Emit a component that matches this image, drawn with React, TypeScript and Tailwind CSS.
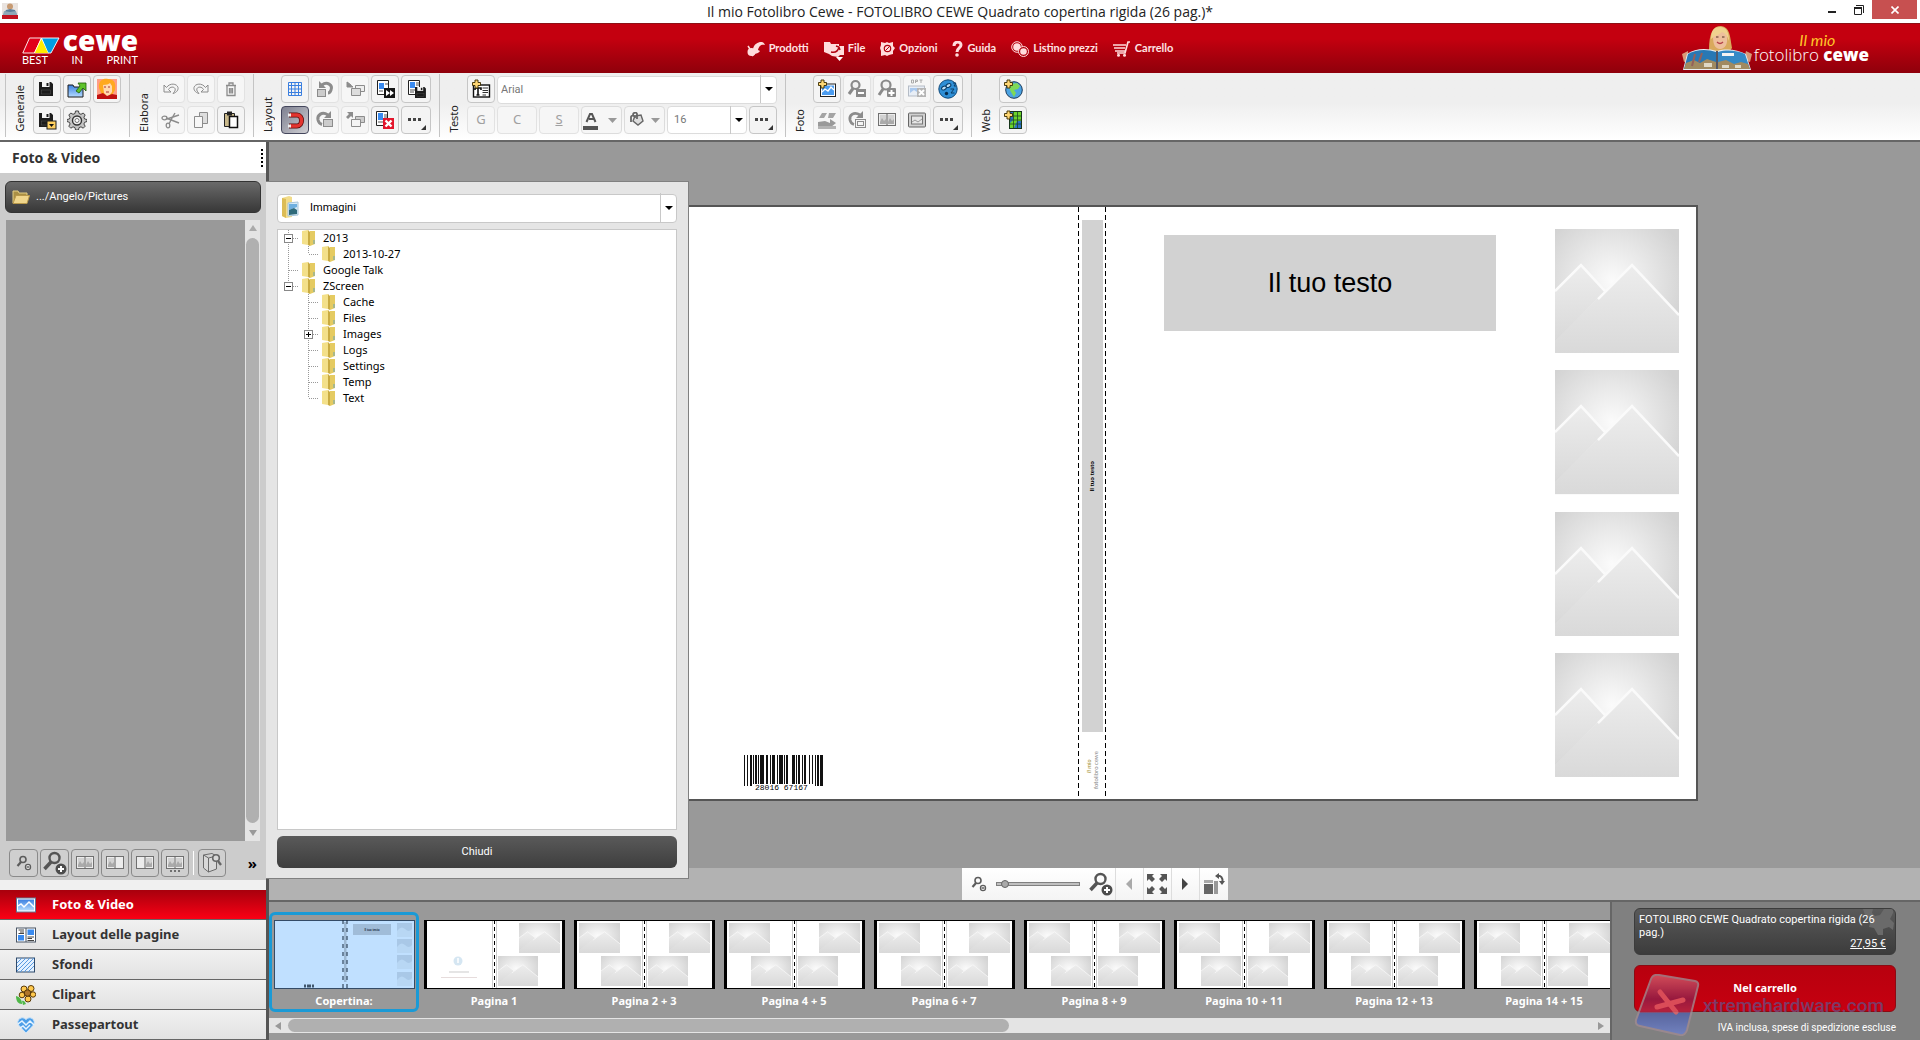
import React, { useState } from "react";

const UI_FONT = "font-['Noto_Sans','Open_Sans',sans-serif]";

interface IconProps {
  size?: string;
  box?: string;
  children: React.ReactNode;
}

const Icon: React.FC<IconProps> = ({ size = "h-5 w-5", box = "0 0 20 20", children }) => (
  <svg viewBox={box} className={`${size} shrink-0`} fill="none" aria-hidden="true">
    {children}
  </svg>
);

/* ---------- shared drawings ---------- */

const SharedDefs: React.FC = () => (
  <svg className="absolute h-0 w-0" aria-hidden="true">
    <defs>
      <radialGradient id="glow" cx="0.46" cy="0.42" r="0.62">
        <stop offset="0" stopColor="#fbfbfb" />
        <stop offset="0.45" stopColor="#e9e9e9" />
        <stop offset="1" stopColor="#d2d2d2" />
      </radialGradient>
      <linearGradient id="slope" x1="0" y1="0" x2="0" y2="1">
        <stop offset="0" stopColor="#ededed" />
        <stop offset="1" stopColor="#d9d9d9" />
      </linearGradient>
      <linearGradient id="sky" x1="0" y1="0" x2="0" y2="1">
        <stop offset="0" stopColor="#3a7fe0" />
        <stop offset="1" stopColor="#b5dcff" />
      </linearGradient>
      <linearGradient id="badge" x1="0" y1="0" x2="0" y2="1">
        <stop offset="0" stopColor="#d8606c" />
        <stop offset="0.4" stopColor="#8e1f4a" />
        <stop offset="0.62" stopColor="#b52a48" />
        <stop offset="0.63" stopColor="#4f5fa6" />
        <stop offset="1" stopColor="#6f83cf" />
      </linearGradient>
      <symbol id="photo" viewBox="0 0 124 124" preserveAspectRatio="none">
        <rect width="124" height="124" fill="url(#glow)" />
        <path d="M0 62L26 36L50 62L0 111Z" fill="url(#slope)" />
        <path d="M0 111L77 36L124 86V124H0Z" fill="url(#slope)" />
        <path d="M0 62L26 36L50 62M43 70L77 36L124 86" stroke="#fafafa" strokeWidth="2.5" fill="none" />
      </symbol>
    </defs>
  </svg>
);

const Plus = () => (
  <path
    d="M4 1h3v2.500h2.500v3H7V9H4V6.500H1.500v-3H4z"
    fill="#ffd774"
    stroke="#3a2c00"
    strokeWidth="0.900"
  />
);

const Disk = ({ x = 3, y = 3, s = 1 }) => (
  <g transform={`translate(${x} ${y}) scale(${s})`}>
    <path d="M0 0h12l2 2v12H0z" fill="#1c1c1c" />
    <rect x="3" width="7.500" height="5" fill="#f5f5f5" />
    <rect x="7.500" y="1" width="2" height="3" fill="#1c1c1c" />
    <rect x="2.500" y="8" width="9" height="4" fill="#1c1c1c" stroke="#555" strokeWidth="0.500" />
  </g>
);

const LensMinus = ({ color = "#8a8a8a" }) => (
  <Icon>
    <circle cx="8.500" cy="6" r="4" stroke={color} strokeWidth="2.200" fill="#f2f2f2" />
    <path d="M6 9.500L2 15" stroke={color} strokeWidth="3" />
    <rect x="9" y="10" width="10" height="8" fill={color} />
    <path d="M11 14h6" stroke="#fff" strokeWidth="2" />
  </Icon>
);

const LensPlus = ({ color = "#8a8a8a" }) => (
  <Icon>
    <circle cx="9" cy="6" r="4.500" stroke={color} strokeWidth="2.200" fill="#f2f2f2" />
    <path d="M6 10L2 16" stroke={color} strokeWidth="3" />
    <rect x="10" y="9" width="9" height="9" rx="1" fill={color} />
    <path d="M14.500 11v6M11.500 14h6" stroke="#fff" strokeWidth="2" />
  </Icon>
);

const Dots = () => (
  <Icon size="h-6 w-6" box="0 0 24 24">
    <path d="M4 10h3v3H4zM9 10h3v3H9zM14 10h3v3h-3z" fill="#444" />
    <path d="M22 17v5h-5z" fill="#333" />
  </Icon>
);

const Spread = ({ left = true, right = true, dots = false }) => (
  <Icon size="h-5 w-5">
    <rect x="1.500" y="3.500" width="17" height="12" fill="#ececec" stroke="#707070" />
    {left && <path d="M3 5h6v9H3z" fill="#d2d2d2" />}
    {left && <path d="M3 12l2-4 2 3 2-2v5H3z" fill="#aaa" />}
    {right && <path d="M11 5h6v9h-6z" fill="#d2d2d2" />}
    {right && <path d="M11 12l2-4 2 3 2-2v5h-6z" fill="#aaa" />}
    <path d="M10 3.500v12" stroke="#606060" />
    {dots && <path d="M5 17h2v2H5zM9 17h2v2H9zM13 17h2v2h-2z" fill="#707070" />}
  </Icon>
);

const Magnifier = ({ plus = false, small = false }) => (
  <Icon size={small ? "h-4 w-4" : "h-6 w-6"} box={small ? "0 0 16 16" : "0 0 24 24"}>
    {small ? (
      <>
        <circle cx="7" cy="4.500" r="3" stroke="#5c5c5c" strokeWidth="1.600" />
        <path d="M5 7L1.500 11" stroke="#5c5c5c" strokeWidth="2.200" />
        <circle cx="12" cy="12" r="2.600" stroke="#5c5c5c" strokeWidth="1.200" fill="#f0f0f0" />
        <path d="M10.500 12h3" stroke="#5c5c5c" strokeWidth="1.400" />
      </>
    ) : (
      <>
        <circle cx="11.500" cy="7" r="5" stroke="#555" strokeWidth="2.400" />
        <path d="M8 11L1.500 18" stroke="#555" strokeWidth="3.500" />
        {plus && <circle cx="18" cy="18" r="5.500" fill="#4c4c4c" />}
        {plus && <path d="M18 15v6M15 18h6" stroke="#fff" strokeWidth="2" />}
      </>
    )}
  </Icon>
);

const Picture = () => (
  <Icon>
    <rect x="0.500" y="3" width="19" height="14" fill="#fff" stroke="#5d7694" />
    <rect x="2" y="4.500" width="16" height="11" fill="url(#sky)" />
    <path d="M2 11l3-2 3 3 5-5 5 5" stroke="#fff" strokeWidth="1.500" />
  </Icon>
);

/* ---------- toolbar ---------- */

interface Tool {
  name: string;
  icon: React.ReactNode;
  off?: boolean;
  active?: boolean;
  wide?: boolean;
}

const ToolButton: React.FC<{ tool: Tool }> = ({ tool }) => (
  <button
    aria-label={tool.name}
    className={`flex h-7 items-center justify-center rounded-sm border ${
      tool.wide ? "w-[30px]" : "w-7"
    } ${
      tool.active
        ? "border-[#44465c] bg-linear-to-br from-[#7e8090] to-[#d0d0d4]"
        : tool.off
          ? "border-[#e2e2e2] bg-[#f6f6f6]"
          : "border-[#c6c6c6] bg-[#f4f4f4]"
    }`}
  >
    {tool.icon}
  </button>
);

const ToolGroup: React.FC<{ label: string; children: React.ReactNode }> = ({ label, children }) => (
  <div className="flex border-l border-[#c4c4c4] pr-2">
    <div className="flex w-[27px] items-end justify-center pb-[5px]">
      <span className="rotate-180 text-[11px] leading-4 text-[#222] [writing-mode:vertical-rl]">{label}</span>
    </div>
    <div className="flex flex-col gap-[3px] pt-px pb-[3px]">{children}</div>
  </div>
);

const ToolRow: React.FC<{ tools: Tool[] }> = ({ tools }) => (
  <div className="flex gap-[2px]">
    {tools.map((tool) => (
      <ToolButton key={tool.name} tool={tool} />
    ))}
  </div>
);

const grey = "#8c8c8c";

const generalTop: Tool[] = [
  { name: "Salva", icon: <Icon><Disk x={2} /></Icon> },
  {
    name: "Apri",
    icon: (
      <Icon>
        <path d="M1 6h5l1 2h9v10H1z" fill="url(#sky)" stroke="#1d1d1d" />
        <path d="M9 12l4-5-2-3h8v8l-3-3-4 5z" fill="#5fc32a" stroke="#1f5b08" strokeWidth="0.800" />
      </Icon>
    ),
  },
  {
    name: "Assistente",
    icon: (
      <Icon size="h-6 w-6" box="0 0 24 24">
        <rect x="2" y="2" width="20" height="20" fill="#ff9d86" />
        <path d="M4 11C3 3 9 1 13 2c7 0 8 5 7 11l-3 5H7z" fill="#ffa91f" />
        <path d="M8 8c3 0 6-1 7-2l2 3v6l-4 5-4-4z" fill="#ffd9b0" />
        <path d="M2 22v-4l6-2 4 3 5-2 5 1v4z" fill="#c01010" />
        <path d="M9 10h2M13 10h2M11 15h3" stroke="#a33" />
      </Icon>
    ),
  },
];

const generalBottom: Tool[] = [
  {
    name: "Salva con nome",
    icon: (
      <Icon>
        <Disk x={2} y={3} />
        <rect x="10" y="11" width="9" height="8" fill="#ffd060" stroke="#1d1d1d" />
        <path d="M12 14h5l-2.500 3z" fill="#111" />
      </Icon>
    ),
  },
  {
    name: "Impostazioni",
    icon: (
      <Icon>
        <path
          d="M8.500 1h3l.5 2.500 2 .8L16.200 3l2 2-1.300 2.200.7 1.800 2.400.5v2l-2.400.8-.7 1.700 1.300 2.200-2 2-2.200-1.400-2 .8-.5 2.400h-3L8 17.600l-2-.8-2.200 1.400-2-2L3.100 14l-.7-1.700L0 11.500v-2L2.400 9l.7-1.800L1.800 5l2-2L6 4.300l2-.8z"
          fill="#c4c4c4"
          stroke="#444"
        />
        <circle cx="10" cy="10.500" r="4.500" fill="#eee" stroke="#333" strokeWidth="1.400" />
        <circle cx="10" cy="10.500" r="2" fill="#fff" stroke="#777" />
      </Icon>
    ),
  },
];

const editTop: Tool[] = [
  {
    name: "Annulla",
    off: true,
    icon: (
      <Icon size="h-4 w-4" box="0 0 16 16">
        <path d="M1 4v7h7L5.500 8.500C7 5.500 11 5.500 12 7.500c1 2-1 3.500-2 5 4-1 5.500-4 5-6C14 2.500 7 1.500 3.500 6.500z" fill="#f4f4f4" stroke={grey} />
      </Icon>
    ),
  },
  {
    name: "Ripeti",
    off: true,
    icon: (
      <Icon size="h-4 w-4" box="0 0 16 16">
        <path d="M15 4v7H8l2.500-2.500C9 5.500 5 5.500 4 7.500c-1 2 1 3.500 2 5-4-1-5.500-4-5-6C2 2.500 9 1.500 12.500 6.500z" fill="#f4f4f4" stroke={grey} />
      </Icon>
    ),
  },
  {
    name: "Elimina",
    off: true,
    icon: (
      <Icon size="h-4 w-4" box="0 0 16 16">
        <path d="M3 4.500h10M6 4V2h4v2M4 5v9.500h8V5M6.500 7v5.500M9.500 7v5.500M8 7v5.500" stroke={grey} strokeWidth="1.300" />
      </Icon>
    ),
  },
];

const editBottom: Tool[] = [
  {
    name: "Taglia",
    off: true,
    icon: (
      <Icon>
        <path d="M5 8l13 5M8 14l3-6 3-5M6 9l12-4" stroke={grey} strokeWidth="1.400" />
        <ellipse cx="3.500" cy="8" rx="2.500" ry="1.800" stroke={grey} strokeWidth="1.300" />
        <ellipse cx="7" cy="15.500" rx="1.800" ry="2.300" stroke={grey} strokeWidth="1.300" />
      </Icon>
    ),
  },
  {
    name: "Copia",
    off: true,
    icon: (
      <Icon>
        <path d="M8.500 2.500h8v11h-8z" fill="#ddd" stroke={grey} />
        <path d="M3.500 6.500h8v11h-8z" fill="#f7f7f7" stroke={grey} />
      </Icon>
    ),
  },
  {
    name: "Incolla",
    icon: (
      <Icon>
        <path d="M3.500 3.500h10v13h-10z" fill="#c9b98b" stroke="#222" />
        <path d="M6 1.500h5v4H6z" fill="#222" />
        <path d="M8.500 6.500h8v11h-8z" fill="#fff" stroke="#111" strokeWidth="1.500" />
      </Icon>
    ),
  },
];

const layoutTop: Tool[] = [
  {
    name: "Griglia",
    icon: (
      <Icon>
        <path d="M3.500 3.500h13v13h-13zM6.500 3v14M10 3v14M13.500 3v14M3 6.500h14M3 10h14M3 13.500h14" stroke="#3a7fe0" />
      </Icon>
    ),
  },
  {
    name: "Ruota a sinistra",
    off: true,
    icon: (
      <Icon>
        <path d="M7 6c5-4 11 0 9 5-.5 1.500-2 3-3 3" stroke={grey} strokeWidth="3" />
        <path d="M4 2v7h7z" fill={grey} />
        <rect x="2.500" y="10.500" width="8" height="7" fill="#ccc" stroke={grey} />
      </Icon>
    ),
  },
  {
    name: "In secondo piano",
    off: true,
    icon: (
      <Icon>
        <path d="M10.500 6.500h9v6h-9z" fill="#eee" stroke={grey} />
        <path d="M6.500 9.500h9v7h-9z" fill="#ddd" stroke={grey} />
        <path d="M2 3l4 3M2 3v5h6z" stroke={grey} fill={grey} />
      </Icon>
    ),
  },
  {
    name: "Applica layout",
    icon: (
      <Icon>
        <path d="M2.500 1.500h11v14h-11z" fill="#fff" stroke="#222" />
        <path d="M4 4h5v6H4z" fill="#3a8bf0" />
        <path d="M10 5h3M4 12h4" stroke="#555" />
        <rect x="9" y="9" width="11" height="10" fill="#151515" />
        <path d="M11 11l4 3-4 3zM15 11l4 3-4 3z" fill="#fff" />
      </Icon>
    ),
  },
  {
    name: "Salva layout",
    icon: (
      <Icon>
        <path d="M2.500 1.500h11v14h-11z" fill="#fff" stroke="#222" />
        <path d="M4 3h5v6H4z" fill="#3a8bf0" />
        <path d="M10 4h3M10 6h3M4 11h5M4 13h4" stroke="#555" />
        <Disk x={9} y={8} s={0.78} />
      </Icon>
    ),
    wide: true,
  },
];

const layoutBottom: Tool[] = [
  {
    name: "Magnete",
    active: true,
    icon: (
      <Icon>
        <path d="M4 5h8c6 0 6 11 0 11H4" stroke="#5a0d0d" strokeWidth="5" />
        <path d="M5 5h7c6 0 6 11 0 11H5" stroke="#e3342f" strokeWidth="3.500" />
        <path d="M3 3.500h3v3H3zM3 14.500h3v3H3z" fill="#eee" />
      </Icon>
    ),
  },
  {
    name: "Ruota a destra",
    off: true,
    icon: (
      <Icon>
        <path d="M13 5C7 1 2 5 3 10c.5 2 2 4 4 4.500" stroke={grey} strokeWidth="3" />
        <path d="M16 1v7H9z" fill={grey} />
        <rect x="8.500" y="9.500" width="9" height="7" fill="#ccc" stroke={grey} />
      </Icon>
    ),
  },
  {
    name: "In primo piano",
    off: true,
    icon: (
      <Icon>
        <path d="M10.500 6.500h9v6h-9z" fill="#ccc" stroke={grey} />
        <path d="M6.500 9.500h9v7h-9z" fill="#f4f4f4" stroke={grey} />
        <path d="M2 2h6v6L6 6 3 9 1 7l3-3z" fill={grey} />
      </Icon>
    ),
  },
  {
    name: "Elimina layout",
    icon: (
      <Icon>
        <path d="M1.500 1.500h11v14h-11z" fill="#fff" stroke="#222" />
        <path d="M3 3h5v7H3z" fill="#3a8bf0" />
        <path d="M9 5h3M9 7h3M3 12h5" stroke="#555" />
        <rect x="8" y="8" width="11" height="11" fill="#e3152b" />
        <path d="M10.500 10.500l6 6M16.500 10.500l-6 6" stroke="#fff" strokeWidth="2.400" />
      </Icon>
    ),
  },
  { name: "Altre opzioni layout", icon: <Dots />, wide: true },
];

const photoTop: Tool[] = [
  {
    name: "Aggiungi foto",
    icon: (
      <Icon>
        <rect x="3.500" y="5" width="15" height="12.500" fill="#fff" stroke="#222" />
        <rect x="5" y="6.500" width="12" height="9.500" fill="#4b9cf0" />
        <path d="M5 13l3-3 3 2 3-4 3 3" stroke="#fff" strokeWidth="1.300" />
        <Plus />
      </Icon>
    ),
  },
  { name: "Riduci foto", off: true, icon: <LensMinus /> },
  { name: "Ingrandisci foto", off: true, icon: <LensPlus /> },
  {
    name: "Ottimizzazione",
    off: true,
    icon: (
      <Icon>
        <path d="M4.500 1h2v3h-2zM8.500 4V1h2v1.500h-2M12.500 1h3M14 1v3" stroke="#aaa" />
        <rect x="1.500" y="7" width="16" height="10" fill="#e8eef6" stroke="#b5bcc6" />
        <path d="M3 14l4-3 3 2V9H3z" fill="#a9c8ee" />
        <rect x="10" y="9" width="9" height="9" fill="#b5b5b5" />
        <path d="M12 11l5 5M17 11l-5 5" stroke="#fff" strokeWidth="2" />
      </Icon>
    ),
  },
  {
    name: "Effetti",
    icon: (
      <Icon>
        <circle cx="10" cy="10" r="9.200" fill="#2f8fd6" stroke="#114a7a" />
        <ellipse cx="6" cy="9" rx="2.600" ry="1.700" fill="#bfe0f7" stroke="#0a3c66" transform="rotate(-30 6 9)" />
        <ellipse cx="10.500" cy="6.500" rx="2.600" ry="1.700" fill="#bfe0f7" stroke="#0a3c66" transform="rotate(-30 10.500 6.500)" />
        <circle cx="8.500" cy="14.500" r="1.700" fill="#062a4a" />
        <path d="M12.500 10h3.500l-3 4h3.500M15 4h3l-2 3h2" stroke="#0a3c66" />
      </Icon>
    ),
    wide: true,
  },
];

const photoBottom: Tool[] = [
  {
    name: "Sostituisci foto",
    off: true,
    icon: (
      <Icon>
        <path d="M5 3h5l-3 5H2zM12 3h7l-3 5h-5z" fill="#a4a4a4" />
        <path d="M1 12l7-1 5 2V9l6 4-5 4H1z" fill="#9a9a9a" />
        <path d="M1 16h18v3H1z" fill="#b4b4b4" />
      </Icon>
    ),
  },
  {
    name: "Ruota foto",
    off: true,
    icon: (
      <Icon>
        <path d="M13 5C7 1 2 5 3 10c.5 2 2 4 4 4.500" stroke={grey} strokeWidth="2.800" />
        <path d="M16 1v7H9z" fill={grey} />
        <rect x="8.500" y="9.500" width="10" height="8" fill="#f4f4f4" stroke={grey} />
        <rect x="10.500" y="11.500" width="6" height="4" stroke={grey} />
      </Icon>
    ),
  },
  { name: "Foto su due pagine", off: true, icon: <Spread /> },
  {
    name: "Cornice",
    off: true,
    icon: (
      <Icon>
        <rect x="1.500" y="3" width="17" height="14" rx="1" fill="#d0d0d0" stroke="#666" />
        <rect x="4.500" y="6" width="11" height="8" fill="#e6e6e6" stroke="#777" />
        <path d="M5 12l3-2 3 2 4-3" stroke="#999" />
      </Icon>
    ),
  },
  { name: "Altre opzioni foto", icon: <Dots />, wide: true },
];

const Globe = () => (
  <Icon>
    <circle cx="11" cy="11" r="8.300" fill="#4ba3e3" stroke="#1a3a5a" />
    <path d="M9 5l5-1 3 3-2 3-4 1 2 3-2 4-3-5-2-4z" fill="#7ed957" />
    <Plus />
  </Icon>
);

const WebMap = () => (
  <Icon>
    <rect x="6.500" y="1.500" width="12" height="17" fill="#2d6fc4" stroke="#17351a" />
    <path d="M10 2h8v9h-4l-3 7H7v-5l3-3z" fill="#6cd52b" />
    <path d="M10.500 2v16M14.500 2v16M7 6h11M7 10h11M7 14h11" stroke="#1d4a24" strokeWidth="0.800" />
    <Plus />
  </Icon>
);

const DropArrow: React.FC<{ width: string }> = ({ width }) => (
  <span
    className={`pointer-events-none absolute inset-y-0 right-0 flex ${width} items-center justify-center border-l border-[#c8c8c8]`}
  >
    <svg viewBox="0 0 8 4" className="h-1 w-2" aria-hidden="true">
      <path d="M0 0h8L4 4z" fill="#000" />
    </svg>
  </span>
);

const TextTools: React.FC = () => (
  <>
    <div className="flex gap-[2px]">
      <ToolButton
        tool={{
          name: "Aggiungi testo",
          icon: (
            <Icon>
              <rect x="2.500" y="6" width="16" height="12" fill="#fff" stroke="#111" strokeWidth="1.400" />
              <path d="M4 9h6v2M4 11V9M7 9v7M5.500 16h3" stroke="#111" strokeWidth="1.600" />
              <path d="M11.500 9H17M11.500 11.500H17M11.500 13.500H17M11.500 16H15" stroke="#333" />
              <Plus />
            </Icon>
          ),
        }}
      />
      <div className="relative h-7 flex-1">
        <select
          aria-label="Carattere"
          className="h-full w-full appearance-none rounded-sm border border-[#dcdcdc] bg-white pl-[3px] font-['Roboto',sans-serif] text-[11px] text-[#777]"
        >
          <option>Arial</option>
        </select>
        <DropArrow width="w-[17px]" />
      </div>
    </div>
    <div className="flex gap-[2px] text-[13px] text-[#a0a0a0]">
      <button aria-label="Grassetto" className="h-7 w-7 rounded-sm border border-[#e2e2e2] bg-[#f6f6f6]">
        G
      </button>
      <button aria-label="Corsivo" className="h-7 w-10 rounded-sm border border-[#e2e2e2] bg-[#f6f6f6]">
        C
      </button>
      <button aria-label="Sottolineato" className="h-7 w-10 rounded-sm border border-[#e2e2e2] bg-[#f6f6f6] underline">
        S
      </button>
      <button
        aria-label="Colore testo"
        className="flex h-7 w-[41px] items-center justify-between rounded-sm border border-[#dcdcdc] bg-[#f6f6f6] pr-1"
      >
        <Icon>
          <path d="M4.500 12L8 4h2l3.500 8M7 9h5" stroke="#555" strokeWidth="2" />
          <path d="M1 16h15v4H1z" fill="#555" />
        </Icon>
        <Icon size="h-[5px] w-[9px]" box="0 0 9 5">
          <path d="M0 0h9L4.500 5z" fill="#999" />
        </Icon>
      </button>
      <button
        aria-label="Colore sfondo"
        className="flex h-7 w-[41px] items-center justify-between rounded-sm border border-[#dcdcdc] bg-[#f6f6f6] px-1"
      >
        <Icon size="h-4 w-4" box="0 0 16 16">
          <path d="M6 4l6-1 2 6-5 4-5-4z" fill="#ddd" stroke="#666" strokeWidth="1.400" />
          <path d="M8 7V2C8 0 4 0 4 3M2 10V5c0-2 4-2 4 1" stroke="#666" strokeWidth="1.800" />
        </Icon>
        <Icon size="h-[5px] w-[9px]" box="0 0 9 5">
          <path d="M0 0h9L4.500 5z" fill="#999" />
        </Icon>
      </button>
      <div className="relative h-7 w-20">
        <select
          aria-label="Dimensione"
          className="h-full w-full appearance-none rounded-sm border border-[#dcdcdc] bg-white pl-[6px] font-['Roboto',sans-serif] text-[11px] text-[#777]"
        >
          <option>16</option>
        </select>
        <DropArrow width="w-[17px]" />
      </div>
      <ToolButton tool={{ name: "Altre opzioni testo", icon: <Dots /> }} />
    </div>
  </>
);

const Toolbar: React.FC = () => (
  <div className="flex bg-linear-to-b from-[#efefef] from-45% to-white pt-px pb-[3px] pl-[5px]">
    <ToolGroup label="Generale">
      <ToolRow tools={generalTop} />
      <ToolRow tools={generalBottom} />
    </ToolGroup>
    <ToolGroup label="Elabora">
      <ToolRow tools={editTop} />
      <ToolRow tools={editBottom} />
    </ToolGroup>
    <ToolGroup label="Layout">
      <ToolRow tools={layoutTop} />
      <ToolRow tools={layoutBottom} />
    </ToolGroup>
    <ToolGroup label="Testo">
      <TextTools />
    </ToolGroup>
    <ToolGroup label="Foto">
      <ToolRow tools={photoTop} />
      <ToolRow tools={photoBottom} />
    </ToolGroup>
    <ToolGroup label="Web">
      <ToolRow tools={[{ name: "Foto dal web", icon: <Globe /> }]} />
      <ToolRow tools={[{ name: "Mappa", icon: <WebMap /> }]} />
    </ToolGroup>
  </div>
);

/* ---------- title bar and header ---------- */

const TitleBar: React.FC = () => (
  <div className="grid h-[23px] grid-cols-[1fr_auto_1fr] items-start bg-white">
    <svg viewBox="0 0 16 16" className="mt-[3px] ml-[2px] h-4 w-4" aria-hidden="true">
      <rect width="16" height="16" fill="#e9e3df" />
      <path d="M0 12h16v4H0z" fill="#c1121f" />
      <circle cx="8" cy="3.500" r="3" fill="#c79a72" />
      <path d="M4 7l4-1 5 1 2 5H1z" fill="#5d7f9b" />
      <path d="M2 8l6 1v3H1zM8 9l6-1 1 4H8z" fill="#8fa9b8" />
    </svg>
    <h1 className="font-['Open_Sans',sans-serif] text-[14px] leading-6 text-[#222]">
      Il mio Fotolibro Cewe - FOTOLIBRO CEWE Quadrato copertina rigida (26 pag.)*
    </h1>
    <div className="mr-[3px] flex justify-end">
      <button aria-label="Riduci a icona" className="flex h-[19px] w-[26px] items-center justify-center">
        <svg viewBox="0 0 10 10" className="h-[10px] w-[10px]" aria-hidden="true">
          <path d="M1 6h8v2H1z" fill="#222" />
        </svg>
      </button>
      <button aria-label="Ripristina" className="flex h-[19px] w-[27px] items-center justify-center">
        <svg viewBox="0 0 10 10" className="h-[10px] w-[10px]" fill="none" aria-hidden="true">
          <path d="M2 .5h7.500V8M.5 3h7v6.500h-7z" stroke="#222" />
          <path d="M0 2h8v2H0z" fill="#222" />
        </svg>
      </button>
      <button aria-label="Chiudi finestra" className="flex h-[19px] w-[45px] items-center justify-center bg-[#c75050]">
        <svg viewBox="0 0 8 8" className="h-2 w-2" aria-hidden="true">
          <path d="M.5.500l7 7M7.500.500l-7 7" stroke="#fff" strokeWidth="1.600" />
        </svg>
      </button>
    </div>
  </div>
);

const pale = "#ffdcdc";

const menu = [
  {
    label: "Prodotti",
    icon: (
      <Icon size="h-4 w-[18px]" box="0 0 18 16">
        <path d="M6 8c1-5 5-7 8-7 2 0 3 1 4 3-3-1-6 0-7 5l2 1c-2 3-5 3-8 2z" fill={pale} />
        <circle cx="4.500" cy="11" r="4" fill={pale} />
        <path d="M1 5l2 3M9 11l-4 4" stroke={pale} strokeWidth="1.500" />
      </Icon>
    ),
  },
  {
    label: "File",
    sub: true,
    icon: (
      <Icon size="h-4 w-5" box="0 0 20 16">
        <path d="M0 1h6l1 2h8v2h5v9h-4l-2 2-6-1-3-2-5-2z" fill={pale} />
        <path d="M7 11c4 1 7-1 8-5M12 5l3 1 1 3" stroke="#b0000f" strokeWidth="1.400" />
      </Icon>
    ),
  },
  {
    label: "Opzioni",
    icon: (
      <Icon size="h-[15px] w-[15px]" box="0 0 15 15">
        <path d="M1 1l4 1 2-1 2 1 4-1v4l2 2-2 3v3l-4 1-2 1-2-1-4 1 0-5-1-3 1-3z" fill={pale} />
        <circle cx="7.500" cy="7.500" r="3.200" stroke="#b0000f" strokeWidth="1.200" />
        <path d="M5.500 9.500l4-4" stroke="#b0000f" />
      </Icon>
    ),
  },
  {
    label: "Guida",
    icon: (
      <Icon size="h-4 w-[11px]" box="0 0 11 16">
        <path d="M2 5c0-5 7-5 7-1 0 3-4 3-4 7" stroke={pale} strokeWidth="3" />
        <circle cx="5" cy="14" r="1.800" fill={pale} />
      </Icon>
    ),
  },
  {
    label: "Listino prezzi",
    icon: (
      <Icon size="h-4 w-[18px]" box="0 0 18 16">
        <circle cx="6" cy="6" r="5.300" stroke={pale} />
        <circle cx="6" cy="6" r="3.800" fill={pale} />
        <circle cx="12.500" cy="10.500" r="5" fill="#b2000e" stroke={pale} />
        <circle cx="12.500" cy="10.500" r="3.300" fill={pale} />
      </Icon>
    ),
  },
  {
    label: "Carrello",
    icon: (
      <Icon size="h-4 w-[18px]" box="0 0 18 16">
        <path d="M0 4h13M1 7h11M2 10h10M17 1h-2l-3 11H4" stroke={pale} strokeWidth="1.700" />
        <circle cx="5.500" cy="14.200" r="1.500" fill={pale} />
        <circle cx="11.500" cy="14.200" r="1.500" fill={pale} />
      </Icon>
    ),
  },
];

const Header: React.FC = () => (
  <header className="grid h-[50px] grid-cols-[1fr_auto_1fr] border-t border-[#8d1015] bg-linear-to-b from-[#c4000f] from-30% to-[#8f000b]">
    <div className="ml-[22px] w-[116px] pt-1 text-white">
      <div className="flex h-[26px] items-end justify-between">
        <svg viewBox="0 0 38 17" className="h-[17px] w-[38px]" aria-hidden="true">
          <path d="M7.500 1h12l-7 15H.8z" fill="#e2001a" stroke="#fff" strokeWidth="0.900" />
          <path d="M19.500 1l7 15H12.500z" fill="#ffed00" stroke="#fff" strokeWidth="0.900" />
          <path d="M19.500 1H37L29 16h-3z" fill="#009ee3" stroke="#fff" strokeWidth="0.900" />
          <path d="M13 16l6.500-13L26 16z" fill="#ffed00" />
        </svg>
        <span className="font-['Open_Sans',sans-serif] text-[28px] leading-7 font-extrabold">cewe</span>
      </div>
      <div className="flex justify-between font-['Lato',sans-serif] text-[11px] leading-3">
        <span>BEST</span>
        <span>IN</span>
        <span>PRINT</span>
      </div>
    </div>
    <nav className="flex items-center gap-[15px]">
      {menu.map((item) => (
        <a
          key={item.label}
          href="#"
          className="relative flex items-center gap-1 font-['Lato',sans-serif] text-[11px] font-bold text-[#ffe3e3]"
        >
          {item.icon}
          {item.label}
          {item.sub && (
            <svg viewBox="0 0 7 4" className="absolute top-full left-3 h-1 w-[7px]" aria-hidden="true">
              <path d="M0 0h7L3.500 4z" fill="#fff" />
            </svg>
          )}
        </a>
      ))}
    </nav>
    <div className="mr-[51px] flex items-end justify-end gap-[2px]">
      <svg viewBox="0 0 70 46" className="mb-[2px] h-[46px] w-[70px]" aria-hidden="true">
        <path d="M27 25C27 8 31 1 39 1c9 1 9 10 11 22l-3 4H30z" fill="#d9a95c" />
        <path d="M31 12c1-8 12-9 14-1 1 8-2 13-7 13s-7-5-7-12z" fill="#eebf9c" />
        <path d="M29 14C29 5 32 2 38 2c7 0 9 6 9 14-2-6-4-8-7-9-3 3-8 4-11 7z" fill="#f0d28f" />
        <path d="M34 12h2.500M40 12h2.500" stroke="#503020" />
        <path d="M35 17c2 2 4 2 6 0" stroke="#b5424a" strokeWidth="1.300" fill="none" />
        <path d="M0 29l6-3 1 9-5 2zM70 29l-6-3-2 9 6 2z" fill="#d99a78" />
        <path d="M5 29c8-6 20-6 30-3 10-3 21-1 29 3l5 16H1z" fill="#e8eef2" />
        <path d="M6 29c8-5 20-5 28-2v17H2z" fill="#2878b4" />
        <path d="M36 27c10-3 20-1 27 2l5 15H36z" fill="#3489c6" />
        <path d="M4 38l8-3 6 3 7-4 9 3v7H2zM36 37l8-2 8 4 7-2 7 2 2 5H36z" fill="#a18a60" />
        <path d="M13 29l-3 12M20 28l-3 9" stroke="#94605a" strokeWidth="2" />
        <path d="M40 28h12v3H40z" fill="#f3f3f3" />
        <path d="M22 38h8v4h-8zM40 40h7v3h-7zM53 40h6v3h-6z" fill="#dfd8c4" />
        <path d="M35 26v18" stroke="#223" strokeWidth="1.500" />
      </svg>
      <div className="mb-[9px] flex flex-col text-white">
        <span className="self-center pl-3 font-['Lato',sans-serif] text-[16px] leading-[13px] text-[#ffc629] italic">
          Il mio
        </span>
        <span className="font-['Open_Sans',sans-serif] text-[17px] leading-[18px] font-light">
          fotolibro <b className="font-extrabold">cewe</b>
        </span>
      </div>
    </div>
  </header>
);

/* ---------- sidebar ---------- */

const sections = [
  { label: "Foto & Video", icon: <Picture /> },
  {
    label: "Layout delle pagine",
    icon: (
      <Icon>
        <rect x="0.500" y="3" width="19" height="14" fill="#fff" stroke="#4a5666" />
        <path d="M2 10h6v5.500H2zM11.500 4.500H18V10h-6.500z" fill="#3a8bf0" />
        <path d="M2.500 5H8M4 7h4M2.500 8.500H8M11.500 12H18M11.500 13.500H16M11.500 15.500H18" stroke="#444" />
        <path d="M10 3v14" stroke="#4a5666" />
      </Icon>
    ),
  },
  {
    label: "Sfondi",
    icon: (
      <Icon>
        <rect x="0.500" y="3" width="18" height="14" fill="#e4f1ff" stroke="#2f4a6b" />
        <path d="M1 8l5-5M1 12l9-9M1 16l13-13M4 17L18 3M8 17L18 7M12 17l6-6" stroke="#5a9ae0" />
      </Icon>
    ),
  },
  {
    label: "Clipart",
    icon: (
      <Icon>
        <path d="M0 11c4 1 6 4 6 8-4 0-6-3-6-8zM10 19c-1-3-3-4-4-3l1 4z" fill="#4fb848" />
        <g fill="#ffc94d" stroke="#5a3a08">
          <circle cx="8" cy="4" r="3" />
          <circle cx="15" cy="3.500" r="3" />
          <circle cx="17" cy="9.500" r="2.700" />
          <circle cx="12" cy="14" r="3" />
          <circle cx="6" cy="10" r="2.800" />
        </g>
        <circle cx="11.500" cy="8" r="3.200" fill="#b0762a" stroke="#5a3a08" />
      </Icon>
    ),
  },
  {
    label: "Passepartout",
    icon: (
      <Icon>
        <path d="M10 18L2.500 10C-.5 5 6 0 10 4.500 14 0 20.500 5 17.500 10z" fill="#4c9fe8" stroke="#cfe6fb" />
        <path d="M2 9l4-3 4 4 4-4 4 4M4 13l3-2 3 3 4-4" stroke="#e6f4ff" strokeWidth="1.500" />
      </Icon>
    ),
  },
];

const viewTools = [
  { name: "Miniature piccole", icon: <Magnifier small />, wide: true },
  { name: "Miniature grandi", icon: <Magnifier plus />, wide: true },
  { name: "Entrambe le pagine", icon: <Spread /> },
  { name: "Pagina sinistra", icon: <Spread right={false} /> },
  { name: "Pagina destra", icon: <Spread left={false} /> },
  { name: "Tutte le pagine", icon: <Spread dots /> },
];

const SideButton: React.FC<{ name: string; wide?: boolean; children: React.ReactNode }> = ({ name, wide, children }) => (
  <button
    aria-label={name}
    className={`flex h-7 items-center justify-center rounded-sm border border-[#8a8a8a] bg-[#cfcfcf] ${
      wide ? "w-[29px]" : "w-7"
    }`}
  >
    {children}
  </button>
);

const Sidebar: React.FC = () => {
  const [section, setSection] = useState("Foto & Video");

  return (
    <aside className="flex w-[266px] shrink-0 flex-col bg-[#ccc]">
      <div className="flex h-[31px] items-center justify-between bg-white pr-[3px] pl-3">
        <h2 className="text-[14px] font-bold text-[#333]">Foto &amp; Video</h2>
        <span className="h-[18px] border-l-2 border-dotted border-black" />
      </div>
      <button className="mx-[5px] mt-2 flex h-8 shrink-0 items-center gap-[6px] rounded-md border border-[#333] bg-linear-to-b from-[#6a6a6a] to-[#383838] px-[6px] font-['Roboto',sans-serif] text-[11px] text-white">
        <Icon size="h-4 w-[18px]" box="0 0 18 16">
          <path d="M1 14V2h5l1 2h8v3" fill="#a98f45" stroke="#e5cf85" />
          <path d="M1 14.500L4 6.500h13.500L15 14.500z" fill="#f0d68c" stroke="#b8984a" />
        </Icon>
        .../Angelo/Pictures
      </button>
      <div className="mx-[6px] mt-[7px] flex flex-1 bg-[#999]">
        <div className="ml-auto flex w-[15px] flex-col items-center justify-between bg-[#e4e4e4] py-[5px]">
          <svg viewBox="0 0 8 6" className="h-[6px] w-2" aria-hidden="true">
            <path d="M0 6h8L4 0z" fill="#aaa" />
          </svg>
          <span className="my-[7px] w-[13px] flex-1 rounded-full bg-[#b0b0b0]" />
          <svg viewBox="0 0 8 6" className="h-[6px] w-2" aria-hidden="true">
            <path d="M0 0h8L4 6z" fill="#999" />
          </svg>
        </div>
      </div>
      <div className="mt-2 mb-[3px] flex items-center gap-[2px] pl-[9px]">
        {viewTools.map((tool) => (
          <SideButton key={tool.name} name={tool.name} wide={tool.wide}>
            {tool.icon}
          </SideButton>
        ))}
        <span className="mx-[2px] h-6 border-l border-white" />
        <SideButton name="Mostra nel libro">
          <Icon>
            <path d="M1.500 2l5 3v14l-5-4zM6.500 5l8-2v13l-8 3zM1.500 2L10 .5l4.500 2.500" stroke="#6a6a6a" fill="#d8d8d8" />
            <circle cx="14" cy="5" r="3.300" stroke="#666" strokeWidth="1.600" fill="#d8d8d8" />
            <path d="M16 8l3 4" stroke="#666" strokeWidth="2.400" />
          </Icon>
        </SideButton>
        <button aria-label="Altri strumenti" className="mr-[9px] ml-auto text-[15px] leading-4 font-bold text-black">
          »
        </button>
      </div>
      <nav className="border-t-10 border-[#f0f0f0]">
        {sections.map((item) => (
          <button
            key={item.label}
            onClick={() => setSection(item.label)}
            className={`flex h-[30px] w-full items-center gap-4 border-b border-[#666] pl-4 text-[13px] font-bold ${
              item.label === section
                ? "bg-linear-to-b from-[#a8000d] to-[#fb0014] text-white"
                : "bg-linear-to-b from-[#f1f1f1] to-[#e2e2e2] text-[#333]"
            }`}
          >
            {item.icon}
            {item.label}
          </button>
        ))}
      </nav>
    </aside>
  );
};

/* ---------- folder chooser ---------- */

interface Folder {
  name: string;
  level: number;
  toggle?: "open" | "closed";
  last?: boolean;
  rail?: boolean;
}

const folders: Folder[] = [
  { name: "2013", level: 0, toggle: "open" },
  { name: "2013-10-27", level: 1, last: true, rail: true },
  { name: "Google Talk", level: 0 },
  { name: "ZScreen", level: 0, toggle: "open", last: true },
  { name: "Cache", level: 1 },
  { name: "Files", level: 1 },
  { name: "Images", level: 1, toggle: "closed" },
  { name: "Logs", level: 1 },
  { name: "Settings", level: 1 },
  { name: "Temp", level: 1 },
  { name: "Text", level: 1, last: true },
];

const Branch: React.FC<{ folder: Folder }> = ({ folder }) => (
  <svg viewBox="0 0 20 16" className="h-4 w-5 shrink-0" fill="none" aria-hidden="true">
    <path d={folder.last ? "M6.500 0v8" : "M6.500 0v16"} stroke="#999" strokeDasharray="1 1" />
    <path d="M7 8.500h9" stroke="#999" strokeDasharray="1 1" />
    {folder.toggle && (
      <>
        <rect x="2.500" y="4.500" width="8" height="8" fill="#fff" stroke="#888" />
        <path d={folder.toggle === "open" ? "M4 8.500h5" : "M4 8.500h5M6.500 6v5"} stroke="#000" />
      </>
    )}
  </svg>
);

const FolderPopup: React.FC<{ onClose: () => void }> = ({ onClose }) => (
  <div className="absolute top-[39px] bottom-[161px] left-[266px] z-10 flex w-[423px] flex-col border-t border-r border-b border-[#808080] bg-[#e5e5e5] pt-[11px] pr-[11px] pb-[10px] pl-[11px]">
    <div className="relative h-[29px] shrink-0">
      <select
        aria-label="Cartella"
        className="h-full w-full appearance-none rounded-sm border border-[#c8c8c8] bg-white pl-8 font-['Roboto',sans-serif] text-[11px] text-black"
      >
        <option>Immagini</option>
      </select>
      <svg viewBox="0 0 19 23" className="pointer-events-none absolute top-[3px] left-1 h-[23px] w-[19px]" aria-hidden="true">
        <path d="M1 2l7-2 3 1v20l-6 1-4-2z" fill="#f2dc8a" />
        <path d="M1 2l4 1v19l-4-2z" fill="#dcbc55" />
        <path d="M7 7l10-1v13l-10 1z" fill="#d6ebf8" stroke="#a8c4d8" />
        <path d="M8 8h8v3l-8 3z" fill="#6fb0e0" />
        <path d="M8 14l5-2 3 2v4l-8 1z" fill="#2f6a7a" />
      </svg>
      <DropArrow width="w-[17px]" />
    </div>
    <ul className="mt-[7px] flex-1 border border-[#c8c8c8] bg-white text-[11px] leading-4 text-black">
      {folders.map((folder) => (
        <li key={folder.name} className="flex h-4 items-center pl-1">
          {folder.level === 1 &&
            (folder.rail ? (
              <svg viewBox="0 0 20 16" className="h-4 w-5 shrink-0" fill="none" aria-hidden="true">
                <path d="M6.500 0v16" stroke="#999" strokeDasharray="1 1" />
              </svg>
            ) : (
              <span className="w-5 shrink-0" />
            ))}
          <Branch folder={folder} />
          <svg viewBox="0 0 14 16" className="mr-[7px] h-4 w-[14px] shrink-0" aria-hidden="true">
            <path d="M0 1l6-1v15l-6-1z" fill="#f3e08a" />
            <path d="M6 0l2 2v14l-2-1z" fill="#c9ab42" />
            <path d="M8 1h5v13l-5 2z" fill="#e5cb62" />
            <path d="M11 10h2v4h-2z" fill="#a9b88a" />
          </svg>
          {folder.name}
        </li>
      ))}
    </ul>
    <button
      onClick={onClose}
      className="mt-[6px] h-8 shrink-0 rounded-md bg-linear-to-b from-[#5a5a5a] to-[#3e3e3e] font-['Roboto',sans-serif] text-[11px] text-white"
    >
      Chiudi
    </button>
  </div>
);

/* ---------- book canvas ---------- */

const bars = [
  [0, 1], [3, 1], [6, 2], [9, 1], [11, 2], [14, 1], [16, 4], [22, 2], [26, 1], [28, 3], [33, 1],
  [35, 4], [40, 1], [42, 2], [48, 3], [52, 1], [54, 2], [58, 1], [60, 2], [65, 1], [68, 1], [71, 1],
  [73, 2], [76, 3],
];

const Barcode: React.FC = () => (
  <svg viewBox="0 0 86 40" className="h-10 w-[86px]" aria-label="Codice a barre">
    {bars.map(([x, w]) => (
      <rect key={x} x={x + 4} y="0" width={w} height="31" fill="#111" />
    ))}
    <rect x="12" y="29" width="62" height="6" fill="#fff" />
    <text x="15" y="35" fontSize="8" fontFamily="Liberation Mono, monospace" fill="#000">
      28016 67167
    </text>
  </svg>
);

const PhotoSlot: React.FC = () => (
  <svg viewBox="0 0 124 124" className="w-[124px] min-h-0 flex-1" preserveAspectRatio="none" aria-label="Foto">
    <use href="#photo" width="124" height="124" />
  </svg>
);

const FoldLine: React.FC = () => (
  <span className="w-px bg-[repeating-linear-gradient(to_bottom,#000_0_5px,transparent_5px_8px)]" />
);

const Book: React.FC = () => (
  <div className="grid flex-1 grid-cols-[1fr_28px_1fr] border-2 border-[#555] bg-white">
    <div className="flex items-end pb-1 pl-[252px]">
      <Barcode />
    </div>
    <div className="flex justify-between">
      <FoldLine />
      <div className="flex flex-col items-center pt-[13px] pb-[10px]">
        <div className="flex w-[21px] flex-1 items-center justify-center bg-[#d2d2d2]">
          <span className="rotate-180 font-['Liberation_Sans',sans-serif] text-[6px] leading-[8px] font-bold text-black [writing-mode:vertical-rl]">
            Il tuo testo
          </span>
        </div>
        <div className="mt-3 h-[45px] rotate-180 font-['Lato',sans-serif] text-[6px] leading-[7px] text-[#888] [writing-mode:vertical-rl]">
          <p className="pt-4 text-[#a08a2a] italic">Il mio</p>
          <p>fotolibro cewe</p>
        </div>
      </div>
      <FoldLine />
    </div>
    <div className="flex justify-between pt-[22px] pr-[17px] pb-[22px] pl-[58px]">
      <div className="mt-[6px] mr-[59px] flex h-[96px] flex-1 items-center justify-center bg-[#d2d2d2] font-['Liberation_Sans',Arial,sans-serif] text-[27px] text-black">
        Il tuo testo
      </div>
      <div className="flex flex-col gap-[17px]">
        <PhotoSlot />
        <PhotoSlot />
        <PhotoSlot />
        <PhotoSlot />
      </div>
    </div>
  </div>
);

const ZoomBar: React.FC = () => (
  <div className="flex h-8 justify-center bg-[#b2b2b2]">
    <div className="flex items-stretch divide-x divide-[#ddd] bg-linear-to-b from-white to-[#f4f4f4]">
      <div className="flex items-center pr-[2px] pl-[9px]">
        <button aria-label="Riduci">
          <Magnifier small />
        </button>
        <input
          type="range"
          aria-label="Zoom"
          defaultValue={6}
          className="mx-[9px] h-1 w-[84px] appearance-none border border-[#808080] bg-[#c0c0c0] [&::-webkit-slider-thumb]:h-2 [&::-webkit-slider-thumb]:w-2 [&::-webkit-slider-thumb]:appearance-none [&::-webkit-slider-thumb]:rounded-full [&::-webkit-slider-thumb]:border [&::-webkit-slider-thumb]:border-[#666] [&::-webkit-slider-thumb]:bg-[#aaa]"
        />
        <button aria-label="Ingrandisci">
          <Magnifier plus />
        </button>
      </div>
      <button aria-label="Precedente" className="flex w-7 items-center justify-center">
        <Icon size="h-3 w-[6px]" box="0 0 6 12">
          <path d="M6 0v12L0 6z" fill="#aaa" />
        </Icon>
      </button>
      <button aria-label="Adatta alla finestra" className="flex w-7 items-center justify-center">
        <Icon>
          <path
            d="M0 0h7L5 2l3 3-3 3-3-3-2 2zM20 0v7l-2-2-3 3-3-3 3-3-2-2zM0 20v-7l2 2 3-3 3 3-3 3 2 2zM20 20h-7l2-2-3-3 3-3 3 3 2-2z"
            fill="#555"
          />
        </Icon>
      </button>
      <button aria-label="Successiva" className="flex w-7 items-center justify-center">
        <Icon size="h-3 w-[6px]" box="0 0 6 12">
          <path d="M0 0v12l6-6z" fill="#444" />
        </Icon>
      </button>
      <button aria-label="Disponi pagine" className="flex w-7 items-center justify-center">
        <Icon size="h-[22px] w-[22px]" box="0 0 22 22">
          <path d="M1 7h9v3H1z" fill="#aaa" />
          <path d="M1 11h9v10H1z" fill="#666" />
          <path d="M11 8h4v13h-4z" fill="#999" />
          <path d="M14 3c4-1 6 2 5.500 6" stroke="#555" strokeWidth="2" />
          <path d="M16 0v6l-4-3zM16 8h6l-3 4z" fill="#555" />
        </Icon>
      </button>
    </div>
  </div>
);

/* ---------- page strip ---------- */

const CoverThumb: React.FC = () => (
  <svg viewBox="0 0 141 69" className="h-[69px] w-[141px] shrink-0" aria-hidden="true">
    <rect x="0.500" y="0.500" width="140" height="68" fill="#c0e0ff" stroke="#344b66" />
    <rect x="70" y="2" width="2.500" height="60" fill="#9db8d2" />
    <path d="M69 0v69M73 0v69" stroke="#16283c" strokeDasharray="4 4" />
    <rect x="79" y="4" width="38" height="11" fill="#a0bcd8" />
    <text x="98" y="11" fontSize="3" textAnchor="middle" fontFamily="Liberation Sans, sans-serif" fontWeight="bold" fill="#16283c">
      Il tuo testo
    </text>
    {[3, 19, 35, 52].map((y) => (
      <g key={y} opacity="0.600">
        <rect x="123" y={y} width="15" height="14" fill="#9ab9d8" />
        <path d={`M123 ${y + 8}q4-6 8-2t7 0v8h-15z`} fill="#b4d2ee" />
      </g>
    ))}
    <path d="M31 64.500v3M34 64.500v3M36 64.500v3M39 64.500v3" stroke="#16283c" strokeWidth="1.500" />
  </svg>
);

const PageThumb: React.FC<{ first?: boolean }> = ({ first }) => (
  <svg viewBox="0 0 141 69" className="h-[69px] w-[141px] shrink-0" aria-hidden="true">
    <rect width="141" height="69" fill="#000" />
    <rect x="3" y="1" width="135" height="67" fill="#fff" />
    {first ? (
      <g>
        <circle cx="34" cy="41" r="4.500" fill="#d5e6f2" />
        <path d="M34 38v5" stroke="#fff" strokeWidth="1.500" />
        <path d="M25 52h20" stroke="#ddd" strokeWidth="1.500" />
        <path d="M17 57.500h36" stroke="#e6dcdc" />
      </g>
    ) : (
      <g>
        <use href="#photo" x="5" y="3" width="41" height="30" />
        <use href="#photo" x="27" y="36" width="40" height="30" />
      </g>
    )}
    <use href="#photo" x="95" y="3" width="41" height="30" />
    <use href="#photo" x="74" y="36" width="40" height="30" />
    <path d="M68.500 1v67M72.500 1v67" stroke="#ccc" />
    <path d="M70.500 0v69" stroke="#000" strokeDasharray="4 3" />
  </svg>
);

const pages = [
  "Copertina:",
  "Pagina 1",
  "Pagina 2 + 3",
  "Pagina 4 + 5",
  "Pagina 6 + 7",
  "Pagina 8 + 9",
  "Pagina 10 + 11",
  "Pagina 12 + 13",
  "Pagina 14 + 15",
];

const PageStrip: React.FC = () => (
  <div className="flex min-w-0 flex-1 flex-col overflow-hidden bg-[#999] pt-[10px]">
    <div className="flex overflow-hidden">
      {pages.map((page, i) => (
        <button
          key={page}
          className={`flex h-[100px] w-[150px] shrink-0 flex-col items-center rounded-md border-3 pt-[5px] text-[11px] leading-4 font-bold text-white ${
            i === 0 ? "border-[#1a9ad6]" : "border-transparent"
          }`}
        >
          {i === 0 ? <CoverThumb /> : <PageThumb first={i === 1} />}
          <span className="mt-1">{page}</span>
        </button>
      ))}
    </div>
    <div className="mt-[6px] flex h-[15px] items-center justify-between bg-[#e4e4e4] px-[6px]">
      <svg viewBox="0 0 6 8" className="mr-[7px] h-2 w-[6px]" aria-hidden="true">
        <path d="M6 0v8L0 4z" fill="#999" />
      </svg>
      <div className="flex-1">
        <div className="h-[13px] w-[55%] rounded-full bg-[#b0b0b0]" />
      </div>
      <svg viewBox="0 0 6 8" className="h-2 w-[6px]" aria-hidden="true">
        <path d="M0 0v8l6-4z" fill="#999" />
      </svg>
    </div>
  </div>
);

const CartPanel: React.FC = () => (
  <div className="relative w-[310px] shrink-0 border-l-2 border-[#666] bg-[#808080] pt-[6px] pr-6 pl-[22px] text-white">
    <div className="relative h-[47px] overflow-hidden rounded-md border border-[#3c3c3c] bg-linear-to-b from-[#5a5a5a] to-[#3c3c3c] px-1 pt-1 font-['Roboto',sans-serif] text-[11px] leading-[13px]">
      <svg viewBox="0 0 40 28" className="absolute top-0 right-0 h-7 w-10" aria-hidden="true">
        <path d="M0 0h8l2 6 6 4-2 8 5 1 4 7h5v-6l6-2 4 3 1-7-4-4 3-6V0h-9l-4 6-5 1-3-3 1-4z" fill="#6a6a6a" />
      </svg>
      <p className="relative">FOTOLIBRO CEWE Quadrato copertina rigida (26 pag.)</p>
      <a href="#" className="absolute right-[9px] bottom-1 underline">
        27,95 €
      </a>
    </div>
    <button className="mt-[10px] h-[47px] w-full rounded-md border border-[#8c0a12] bg-linear-to-b from-[#b8000e] to-[#c60010] text-[11px] font-bold">
      Nel carrello
    </button>
    <p className="mt-2 text-right font-['Roboto',sans-serif] text-[10px] leading-4 whitespace-nowrap">
      IVA inclusa, spese di spedizione escluse
    </p>
    <svg
      viewBox="0 0 66 62"
      className="pointer-events-none absolute top-[72px] left-[22px] h-[62px] w-[66px] opacity-80"
      aria-hidden="true"
    >
      <path d="M25 1l36 6q4 1 3 5L53 56q-2 6-7 5L6 52q-5-1-4-6L17 5q2-5 8-4z" fill="url(#badge)" stroke="#a08a92" strokeWidth="2" />
      <path d="M26 18l16 20M49 26L23 33" stroke="#e0606a" strokeWidth="5" strokeLinecap="round" />
    </svg>
    <span className="pointer-events-none absolute right-9 bottom-[24px] font-['Roboto',sans-serif] text-[19px] leading-5 font-medium text-[#7d3a66]">
      xtremehardware.com
    </span>
  </div>
);

export default function App() {
  const [choosing, setChoosing] = useState(true);

  return (
    <div className={`flex min-h-screen flex-col bg-[#999] ${UI_FONT}`}>
      <SharedDefs />
      <TitleBar />
      <Header />
      <Toolbar />
      <div className="relative flex flex-1 border-t-2 border-[#666]">
        <Sidebar />
        <main className="flex min-w-0 flex-1 flex-col border-l-3 border-[#555]">
          <div className="flex flex-1 pt-[63px] pr-[222px] pb-[67px] pl-[217px]">
            <Book />
          </div>
          <ZoomBar />
          <div className="flex h-[140px] border-t-2 border-[#666]">
            <PageStrip />
            <CartPanel />
          </div>
        </main>
        {choosing && <FolderPopup onClose={() => setChoosing(false)} />}
      </div>
    </div>
  );
}
